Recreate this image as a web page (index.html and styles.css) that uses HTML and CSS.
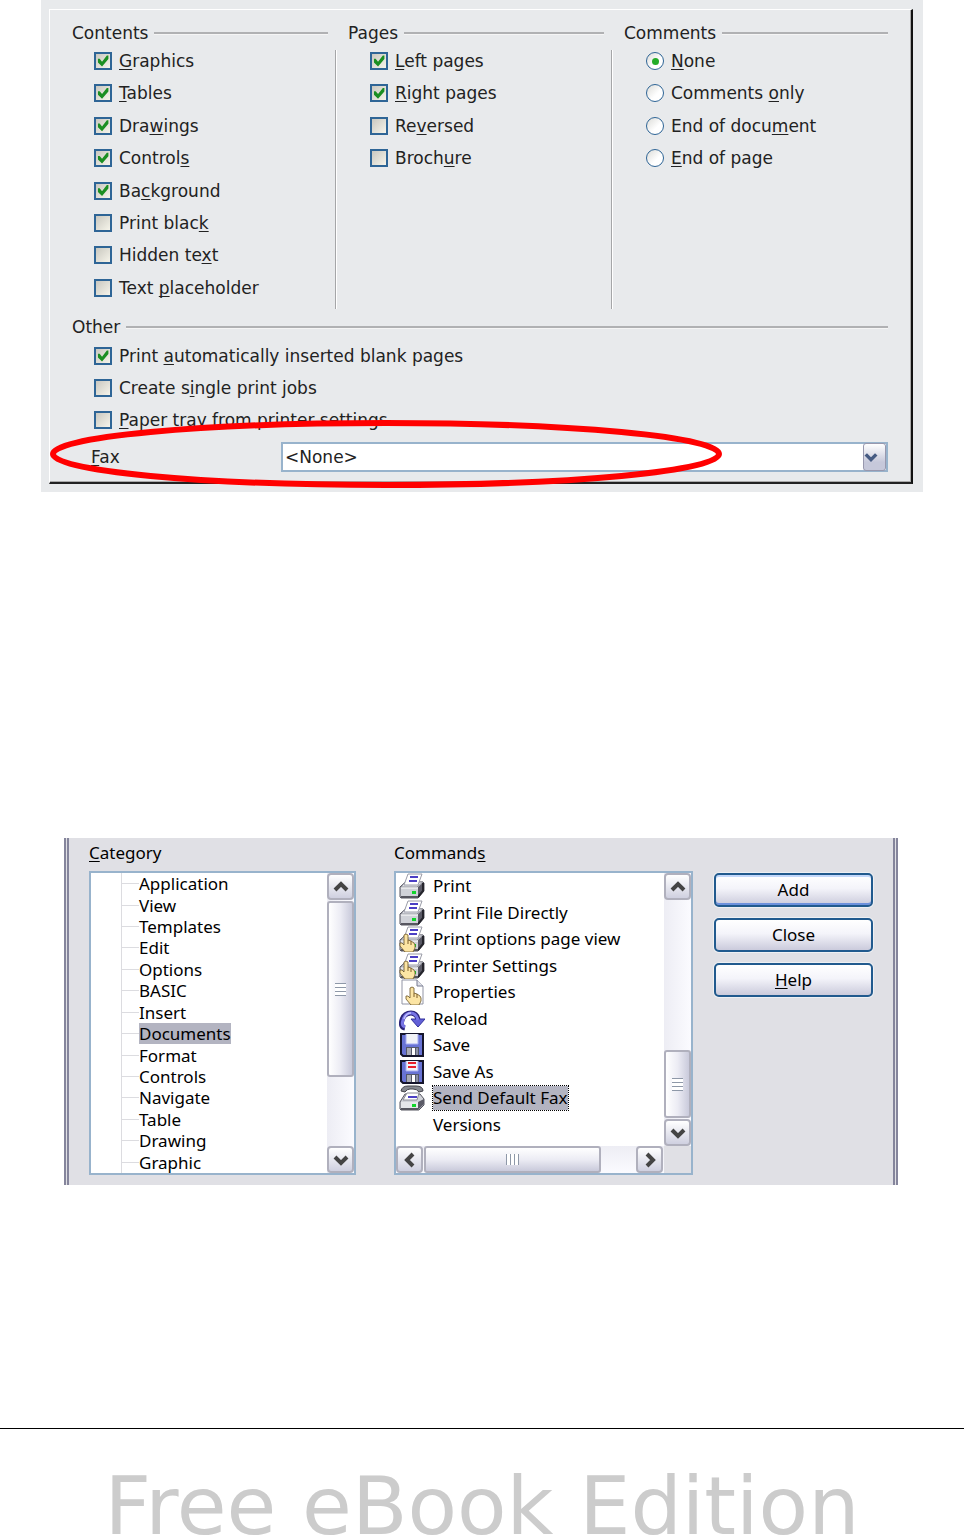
FILE: index.html
```html
<!DOCTYPE html>
<html lang="en">
<head>
  <meta charset="UTF-8">
  <meta name="viewport" content="width=device-width, initial-scale=1.0">
  <title>Fax settings</title>
  <link rel="stylesheet" href="styles.css">
</head>
<body>
  <!-- shared icons -->
  <svg class="sprite" aria-hidden="true">
    <symbol id="arrow" viewBox="0 0 16 16">
      <path d="M2 11 L8 5 L14 11" fill="none" stroke="currentColor" stroke-width="4"/>
    </symbol>
    <symbol id="printer" viewBox="0 0 26 26">
      <path d="M1 14 L6 9 H24 L25 10 V18 L19 25 H2 L1 24 Z" fill="#c9cbd2" stroke="#55555f"/>
      <path d="M19 14 L25 9 V18 L19 24 Z" fill="#5a5a66"/>
      <path d="M24 10 V18 L19 24" fill="none" stroke="#25252c" stroke-width="2"/>
      <path d="M2 14 L6 9 H24 L18 14 Z" fill="#e4e5ea" stroke="#8b8c96"/>
      <path d="M9 1 H23 L19 12 H5 Z" fill="#fff" stroke="#9a9ca8"/>
      <path d="M11 4 H19 M10 8 H18" stroke="#4b3fc4" stroke-width="2"/>
      <path d="M2 15 H19 V23 H2 Z" fill="#d0d2d8"/>
      <path d="M2 15 H19" stroke="#fff"/>
      <path d="M2 24 H19" stroke="#56565f" stroke-width="2"/>
      <rect x="13" y="18" width="4" height="3" fill="#11d52b"/>
    </symbol>
    <symbol id="hand" viewBox="0 0 26 26">
      <path d="M5 9 Q7 7 9 9 V14 L12 15 L15 17 L16 19 V22 L14 26 H6 L1 20 V17 H3 L5 19 Z" fill="#fce5a4" stroke="#6b5424" stroke-width=".8"/>
      <path d="M9 14 V18 M12 15 V19" stroke="#7c5d28"/>
    </symbol>
    <symbol id="page" viewBox="0 0 26 26">
      <path d="M3 1 H18 L24 7 V25 H3 Z" fill="#fff" stroke="#9295a5"/>
      <path d="M18 1 V7 H24" fill="#e1e3ea" stroke="#777b90"/>
    </symbol>
    <symbol id="reload" viewBox="0 0 26 26">
      <path d="M6 22 Q1 21 3 14 Q5 7 12 7 Q18 7 19 14" fill="none" stroke="#2c2479" stroke-width="5"/>
      <path d="M12 13 H26 L19 21 Z" fill="#6260d7" stroke="#32309d"/>
      <path d="M6 21 Q2 20 4 14 Q6 7 12 7 Q17 7 19 14" fill="none" stroke="#7774e5" stroke-width="3"/>
      <path d="M5 13 Q7 7 12 7" fill="none" stroke="#c1bfff" stroke-width="1.5"/>
    </symbol>
    <symbol id="floppy" viewBox="0 0 26 26">
      <path d="M2 2 H24 V24 H4 L2 22 Z" fill="#6873d4" stroke="#15152b" stroke-width="2"/>
      <rect x="7" y="2" width="12" height="10" fill="#f1f2f7"/>
      <path d="M7 2 V12 H19 V2" fill="none" stroke="#a5acf0"/>
      <rect x="7" y="15" width="13" height="8" fill="#555869"/>
      <rect x="8" y="16" width="4" height="7" fill="#a9abb5"/>
      <rect x="13" y="16" width="3" height="7" fill="#fff"/>
      <rect x="17" y="16" width="2" height="7" fill="#8c90a5"/>
    </symbol>
    <symbol id="fax" viewBox="0 0 26 26">
      <path d="M1 17 L6 9 H21 L25 14 V20 L20 25 H2 L1 24 Z" fill="#d0d2d8" stroke="#55555f"/>
      <path d="M8 8 H20 L18 15 H4 Z" fill="#fff" stroke="#8b8c96"/>
      <path d="M9 12 H18" stroke="#4b3fc4" stroke-width="2"/>
      <path d="M19 17 L25 14 V19 L19 25 Z" fill="#5a5a66"/>
      <path d="M2 17 H19 V23 H2 Z" fill="#e5e6ea"/>
      <path d="M2 24 H19" stroke="#56565f" stroke-width="2"/>
      <path d="M2 6 Q3 1 9 1 H17 Q24 1 24 6 L20 7 Q18 4 14 4 H11 Q8 4 6 7 Z" fill="#85888f" stroke="#44444c"/>
      <rect x="13" y="19" width="4" height="3" fill="#11d52b"/>
    </symbol>
  </svg>

  <!-- printer options -->
  <main>
    <form class="options">
      <div class="frame">
        <div class="columns">
          <section class="group">
            <h2>Contents</h2>
            <div class="rows">
              <label><input type="checkbox" checked><span><u>G</u>raphics</span></label>
              <label><input type="checkbox" checked><span><u>T</u>ables</span></label>
              <label><input type="checkbox" checked><span>Dra<u>w</u>ings</span></label>
              <label><input type="checkbox" checked><span>Control<u>s</u></span></label>
              <label><input type="checkbox" checked><span>Ba<u>c</u>kground</span></label>
              <label><input type="checkbox"><span>Print blac<u>k</u></span></label>
              <label><input type="checkbox"><span>Hidden te<u>x</u>t</span></label>
              <label><input type="checkbox"><span>Text <u>p</u>laceholder</span></label>
            </div>
          </section>
          <section class="group">
            <h2>Pages</h2>
            <div class="rows">
              <label><input type="checkbox" checked><span><u>L</u>eft pages</span></label>
              <label><input type="checkbox" checked><span><u>R</u>ight pages</span></label>
              <label><input type="checkbox"><span>Re<u>v</u>ersed</span></label>
              <label><input type="checkbox"><span>Broch<u>u</u>re</span></label>
            </div>
          </section>
          <section class="group">
            <h2>Comments</h2>
            <div class="rows">
              <label><input type="radio" name="comments" checked><span><u>N</u>one</span></label>
              <label><input type="radio" name="comments"><span>Comments <u>o</u>nly</span></label>
              <label><input type="radio" name="comments"><span>End of docu<u>m</u>ent</span></label>
              <label><input type="radio" name="comments"><span><u>E</u>nd of page</span></label>
            </div>
          </section>
        </div>

        <section class="other">
          <h2>Other</h2>
          <div class="other-rows">
            <label><input type="checkbox" checked><span>Print <u>a</u>utomatically inserted blank pages</span></label>
            <label><input type="checkbox"><span>Create s<u>i</u>ngle print jobs</span></label>
            <label><input type="checkbox"><span><u>P</u>aper tray from printer settings</span></label>
          </div>
          <div class="fax">
            <label for="fax-device"><u>F</u>ax</label>
            <div class="combo">
              <select id="fax-device">
                <option>&lt;None&gt;</option>
              </select>
              <span class="combo-arrow"><svg class="down"><use href="#arrow"/></svg></span>
            </div>
          </div>
        </section>
      </div>
      <svg class="marker" viewBox="0 0 672 68" aria-hidden="true">
        <ellipse cx="336" cy="34" rx="333" ry="31" fill="none" stroke="#f00" stroke-width="6"/>
      </svg>
    </form>

    <!-- add commands -->
    <form class="commands">
      <section class="category">
        <h3><u>C</u>ategory</h3>
        <div class="box">
          <ul class="tree">
            <li><span>Application</span></li>
            <li><span>View</span></li>
            <li><span>Templates</span></li>
            <li><span>Edit</span></li>
            <li><span>Options</span></li>
            <li><span>BASIC</span></li>
            <li><span>Insert</span></li>
            <li><span class="selected">Documents</span></li>
            <li><span>Format</span></li>
            <li><span>Controls</span></li>
            <li><span>Navigate</span></li>
            <li><span>Table</span></li>
            <li><span>Drawing</span></li>
            <li><span>Graphic</span></li>
          </ul>
          <div class="scroll">
            <button type="button" class="step" aria-label="Scroll up"><svg><use href="#arrow"/></svg></button>
            <div class="thumb thumb-tall"><i class="grip"></i></div>
            <button type="button" class="step last" aria-label="Scroll down"><svg class="down"><use href="#arrow"/></svg></button>
          </div>
        </div>
      </section>

      <section class="list">
        <h3>Command<u>s</u></h3>
        <div class="box box-list">
          <ul class="items">
            <li><svg><use href="#printer"/></svg><span>Print</span></li>
            <li><svg><use href="#printer"/></svg><span>Print File Directly</span></li>
            <li><svg><use href="#printer"/><use href="#hand"/></svg><span>Print options page view</span></li>
            <li><svg><use href="#printer"/><use href="#hand"/></svg><span>Printer Settings</span></li>
            <li><svg><use href="#page"/><use href="#hand" x="6"/></svg><span>Properties</span></li>
            <li><svg><use href="#reload"/></svg><span>Reload</span></li>
            <li><svg><use href="#floppy"/></svg><span>Save</span></li>
            <li><svg><use href="#floppy"/><path d="M9 4 H17 M9 8 H17" stroke="#e8202c" stroke-width="2"/></svg><span>Save As</span></li>
            <li><svg><use href="#fax"/></svg><span class="selected focus">Send Default Fax</span></li>
            <li><svg></svg><span>Versions</span></li>
          </ul>
          <div class="scroll">
            <button type="button" class="step" aria-label="Scroll up"><svg><use href="#arrow"/></svg></button>
            <div class="thumb thumb-low"><i class="grip"></i></div>
            <button type="button" class="step" aria-label="Scroll down"><svg class="down"><use href="#arrow"/></svg></button>
          </div>
          <div class="scroll scroll-x">
            <button type="button" class="step" aria-label="Scroll left"><svg class="left"><use href="#arrow"/></svg></button>
            <div class="thumb thumb-wide"><i class="grip"></i></div>
            <button type="button" class="step last" aria-label="Scroll right"><svg class="right"><use href="#arrow"/></svg></button>
          </div>
        </div>
      </section>

      <div class="actions">
        <button type="button" class="button default">Add</button>
        <button type="button" class="button">Close</button>
        <button type="button" class="button"><span><u>H</u>elp</span></button>
      </div>
    </form>
  </main>

  <footer>Free eBook Edition</footer>
</body>
</html>
```

FILE: styles.css
```css
:root {
  --panel: #e8eaec;
  --dialog: #e0e0e5;
  --field-border: #98b3cc;
  --box-border: #2e6596;
  --selected: #b3b4c1;
  --ui: "DejaVu Sans", Verdana, sans-serif;
  --ui-narrow: "Noto Sans", Tahoma, sans-serif;
}

* {
  box-sizing: border-box;
}

body {
  margin: 0;
  background: #fff;
  color: #222;
  font: 17px/22px var(--ui);
}

h2, h3 {
  margin: 0;
  font-size: inherit;
  font-weight: normal;
}

ul {
  margin: 0;
  padding: 0;
  list-style: none;
}

u {
  text-underline-offset: 2px;
  text-decoration-skip-ink: none;
}

.sprite {
  position: absolute;
  width: 0;
  height: 0;
}

/* printer options */
.options {
  position: relative;
  margin: 0 41px;
  padding: 9px 10px 8px 8px;
  background: var(--panel);
}

.frame {
  padding: 6px 23px 10px 22px;
  border: 1px solid #fff;
  border-right: 2px solid #111;
  border-bottom: 2px solid #222;
  box-shadow: inset -1px -1px #aaa;
}

.columns {
  display: grid;
  grid-template-columns: repeat(3, 1fr);
  gap: 12px;
}

h2 {
  display: flex;
  align-items: center;
  gap: 6px;
  height: 34px;
}
h2::after {
  content: "";
  flex: 1;
  height: 2px;
  background: #b0b1b3;
  border-bottom: 1px solid #f5f5f5;
}

.group h2 {
  padding-right: 8px;
}
.group:last-child h2 {
  padding-right: 0;
}

.rows {
  display: grid;
  grid-template-rows: repeat(8, 1fr);
  align-items: start;
  height: 259px;
  padding-left: 22px;
  border-right: 1px solid #a5a6a8;
  box-shadow: 1px 0 #fff;
}
.group:last-child .rows {
  border: none;
  box-shadow: none;
}

.rows label,
.other-rows label {
  display: flex;
  align-items: center;
  gap: 7px;
}

input {
  display: grid;
  place-content: center;
  width: 18px;
  height: 18px;
  margin: 0;
  appearance: none;
  background: linear-gradient(135deg, #c9c8c0, #f6f4ea) padding-box;
  border: 2px solid var(--box-border);
}
input[type="checkbox"]:checked::before {
  content: "";
  width: 12px;
  height: 12px;
  background: #1b8f22;
  clip-path: polygon(8% 32%, 22% 32%, 42% 56%, 82% 5%, 95% 5%, 95% 34%, 42% 95%, 8% 62%);
}
input[type="radio"] {
  border-radius: 50%;
  border-width: 1px;
  background: linear-gradient(135deg, #dcdcd8, #fff 60%);
}
input[type="radio"]:checked::before {
  content: "";
  width: 7px;
  height: 7px;
  border-radius: 50%;
  background: #24ac27;
}

.other h2 {
  height: 36px;
}

.other-rows {
  display: grid;
  gap: 10px;
  padding-left: 22px;
}

.fax {
  display: flex;
  align-items: center;
  margin-top: 11px;
  padding-left: 19px;
}
.fax label {
  width: 190px;
}

.combo {
  position: relative;
  flex: 1;
  height: 30px;
}
.combo select {
  width: 100%;
  height: 100%;
  padding: 0 2px;
  appearance: none;
  background: #fff;
  border: 2px solid var(--field-border);
  border-radius: 0;
  color: #222;
  font: inherit;
}
.combo-arrow {
  position: absolute;
  top: 1px;
  right: 2px;
  display: grid;
  place-items: center start;
  width: 23px;
  height: 28px;
  border: 1px solid #9898ae;
  border-radius: 3px;
  background: linear-gradient(#fff, #c6c8da 70%);
  color: #465b83;
  pointer-events: none;
}
.combo-arrow svg {
  width: 14px;
  height: 14px;
}

/* hand drawn ring round the fax row */
.marker {
  position: absolute;
  left: 9px;
  bottom: 4px;
  width: 672px;
  height: 68px;
  pointer-events: none;
}

/* add commands */
.commands {
  display: flex;
  margin: 346px 66px 0 64px;
  padding: 0 20px 10px;
  border: solid #85859c;
  border-style: none double;
  border-width: 0 5px;
  background: var(--dialog);
  color: #000;
  font-family: var(--ui-narrow);
}

h3 {
  height: 33px;
  line-height: 30px;
}

.category {
  flex: 267;
  margin-right: 38px;
}

.list {
  flex: 299;
  margin-right: 21px;
}

.box {
  display: grid;
  grid-template-columns: 1fr 27px;
  height: 304px;
  border: 2px solid var(--field-border);
  background: #fff;
  overflow: hidden;
}
.box-list {
  grid-template: 273px 27px / 1fr 27px;
  background: var(--dialog);
}

.tree {
  display: grid;
  grid-template-rows: repeat(14, 1fr);
  height: 300px;
  padding-left: 30px;
  line-height: 21px;
}
.tree li {
  display: flex;
  align-items: center;
  border-left: 1px solid #dcdce0;
}
.tree li::before {
  content: "";
  width: 17px;
  height: 1px;
  background: #dcdce0;
}

.selected {
  background: var(--selected);
}

.items {
  padding-bottom: 8px;
  background: #fff;
}
.items li {
  display: flex;
  align-items: center;
  gap: 8px;
  height: 10%;
  padding-left: 3px;
}
.items svg {
  width: 26px;
  height: 26px;
}
.focus {
  outline: 1px dotted #000;
  line-height: 24px;
}

.scroll {
  display: flex;
  flex-direction: column;
  gap: 1px;
  background: linear-gradient(90deg, #ededf4, #fbfbff);
}
.scroll-x {
  flex-direction: row;
  background: linear-gradient(#ededf4, #fbfbff);
}

.step {
  display: grid;
  place-items: center;
  width: 27px;
  height: 27px;
  padding: 0;
  border: 2px solid #b0b0bd;
  border-radius: 4px;
  background: linear-gradient(#fff, #cfd0e0);
  color: #444;
}
.step svg {
  width: 16px;
  height: 16px;
}
.step.last {
  margin-top: auto;
}
.scroll-x .last {
  margin: 0 1px 0 auto;
}

.down {
  transform: rotate(180deg);
}
.left {
  transform: rotate(-90deg);
}
.right {
  transform: rotate(90deg);
}

.thumb {
  display: grid;
  place-items: center;
  border: 2px solid #b0b0bd;
  border-radius: 3px;
  background: linear-gradient(90deg, #fff, #ececf4 50%, #c9cadb);
}
.thumb-tall {
  height: 176px;
}
.thumb-low {
  height: 68px;
  margin-top: auto;
}
.thumb-wide {
  width: 177px;
  background: linear-gradient(#fff, #ececf4 50%, #c9cadb);
}

.grip {
  width: 11px;
  height: 13px;
  background: repeating-linear-gradient(#8e98a8 0 1px, #fff 1px 4px);
}
.thumb-wide .grip {
  width: 13px;
  height: 11px;
  background: repeating-linear-gradient(90deg, #8e98a8 0 1px, #fff 1px 4px);
}

.actions {
  display: grid;
  align-content: start;
  gap: 11px;
  width: 159px;
  padding-top: 35px;
}

.button {
  height: 34px;
  padding: 0;
  border: 2px solid #215a8e;
  border-radius: 5px;
  background: linear-gradient(#fff, #f4f4fa 45%, #cbcbdc);
  box-shadow: 0 0 0 1px #eef0f3;
  color: #000;
  font: inherit;
}
.default {
  box-shadow: inset 0 2px #c3d8fb, inset 0 -2px #6d91dd, 0 0 0 1px #eef0f3;
}

footer {
  margin-top: 243px;
  padding-top: 45px;
  border-top: 1px solid #000;
  color: #ccc;
  font-size: 81px;
  line-height: 64px;
  text-align: center;
}
```
